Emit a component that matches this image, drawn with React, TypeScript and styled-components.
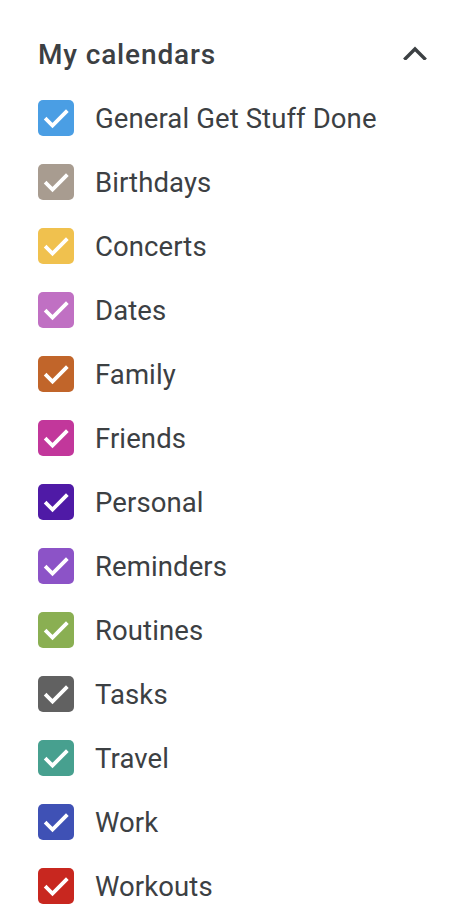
import React from 'react';
import styled, { createGlobalStyle } from 'styled-components';

const GlobalStyle = createGlobalStyle`
  html, body {
    margin: 0;
    padding: 0;
    background: #ffffff;
  }
  body {
    font-family: Roboto, "Liberation Sans", Arial, sans-serif;
    color: #3c4043;
  }
`;

const calendars = [
  { name: 'General Get Stuff Done', color: '#4a9ee4' },
  { name: 'Birthdays', color: '#a89c90' },
  { name: 'Concerts', color: '#f0c14e' },
  { name: 'Dates', color: '#c070c3' },
  { name: 'Family', color: '#c1652a' },
  { name: 'Friends', color: '#c2379b' },
  { name: 'Personal', color: '#4f1aa6' },
  { name: 'Reminders', color: '#8c53c7' },
  { name: 'Routines', color: '#8aaf52' },
  { name: 'Tasks', color: '#616161' },
  { name: 'Travel', color: '#47a08f' },
  { name: 'Work', color: '#3f51b5' },
  { name: 'Workouts', color: '#c8271f' },
];

const Panel = styled.div`
  width: 470px;
  padding: 22px 43px 0 38px;
  box-sizing: border-box;
`;

const Header = styled.div`
  display: flex;
  align-items: center;
  justify-content: space-between;
  height: 64px;
`;

const Title = styled.h2`
  margin: 0;
  font-size: 28px;
  font-weight: 500;
  color: #3c4043;
  letter-spacing: 0.85px;
`;

const Toggle = styled.button`
  border: 0;
  background: none;
  padding: 0;
  display: flex;
  align-items: center;
  color: #3c4043;
  margin-top: -2px;
`;

const List = styled.ul`
  list-style: none;
  margin: 0;
  padding: 0;
`;

const Row = styled.li`
  display: flex;
  align-items: center;
  height: 64px;
  gap: 21px;
`;

const Box = styled.span<{ $color: string }>`
  width: 36px;
  height: 36px;
  border-radius: 5px;
  background: ${(p) => p.$color};
  display: flex;
  align-items: center;
  justify-content: center;
  flex-shrink: 0;
`;

const Label = styled.span`
  font-size: 27.5px;
  color: #3c4043;
  letter-spacing: 0.1px;
`;

const Check = () => (
  <svg width="36" height="36" viewBox="0 0 36 36">
    <path d="M8.5 19.5 L14.5 25.5 L28 12" fill="none" stroke="#ffffff" strokeWidth="3.8" strokeLinecap="square" />
  </svg>
);

const ChevronUp = () => (
  <svg width="24" height="14" viewBox="0 0 24 14">
    <path d="M2.5 12.5 L12 3 L21.5 12.5" fill="none" stroke="currentColor" strokeWidth="3.4" strokeLinecap="square" />
  </svg>
);

export default function App() {
  return (
    <>
      <GlobalStyle />
      <Panel>
        <Header>
          <Title>My calendars</Title>
          <Toggle aria-label="Collapse">
            <ChevronUp />
          </Toggle>
        </Header>
        <List>
          {calendars.map((c) => (
            <Row key={c.name}>
              <Box $color={c.color}>
                <Check />
              </Box>
              <Label>{c.name}</Label>
            </Row>
          ))}
        </List>
      </Panel>
    </>
  );
}
